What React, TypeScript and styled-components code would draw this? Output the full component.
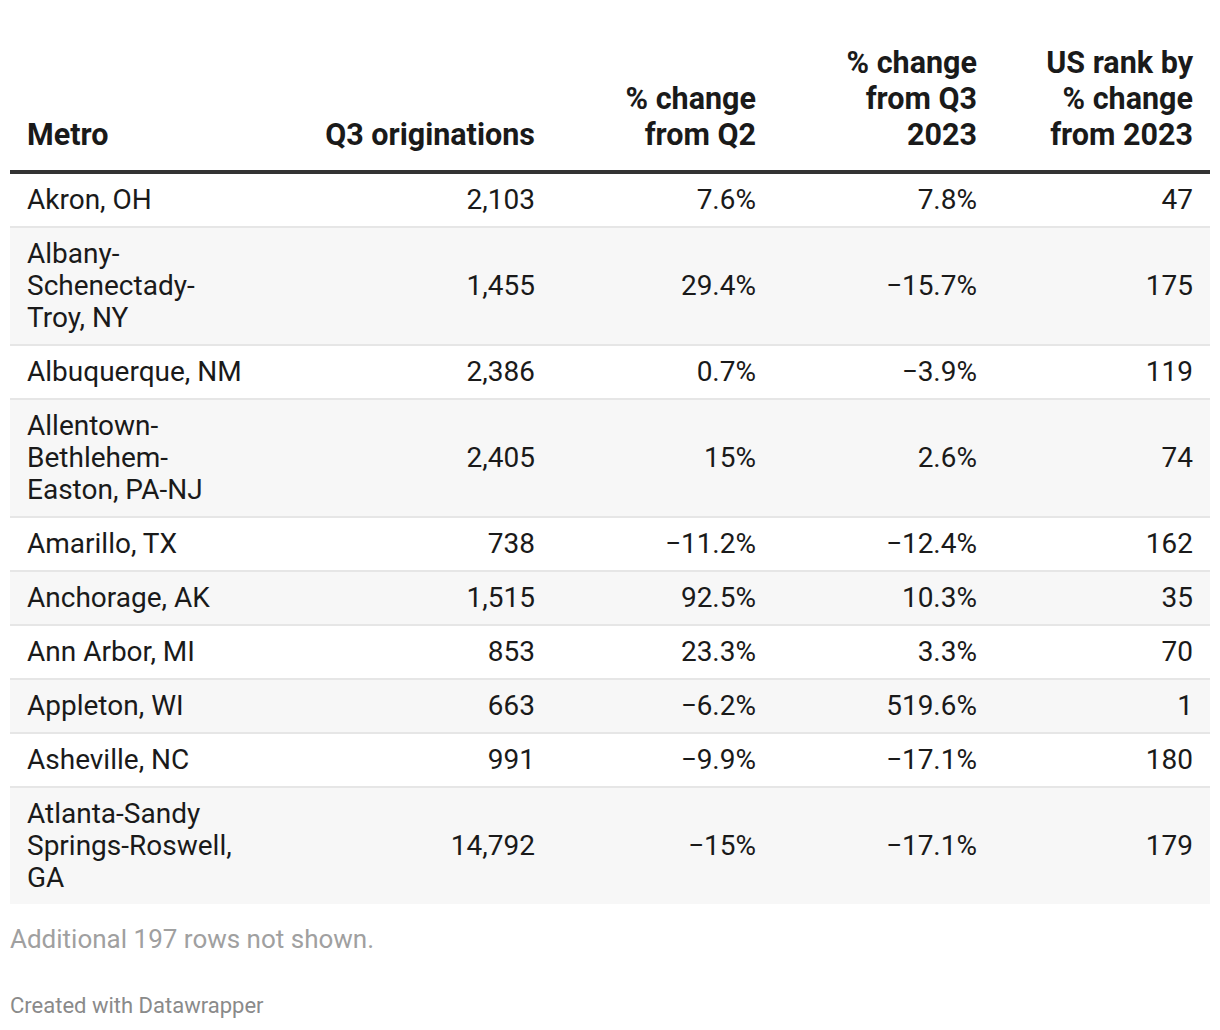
import React from "react";
import styled, { createGlobalStyle } from "styled-components";

const GlobalStyle = createGlobalStyle`
  html, body {
    margin: 0;
    padding: 0;
    background: #ffffff;
  }
  body {
    font-family: Roboto, "Liberation Sans", Arial, sans-serif;
    color: #1d1d1d;
  }
`;

const Page = styled.div`
  padding: 45px 10px 0 10px;
  width: 1200px;
`;

const Table = styled.table`
  width: 1200px;
  border-collapse: collapse;
  table-layout: fixed;
  font-size: 28px;
`;

const HeadCell = styled.th<{ $align?: "left" | "right" }>`
  text-align: ${(p) => p.$align || "right"};
  vertical-align: bottom;
  font-weight: 700;
  font-size: 30.5px;
  line-height: 36px;
  padding: 0 17px 17px 17px;
  border-bottom: 4px solid #333333;
  color: #1a1a1a;
`;

const Row = styled.tr<{ $shade: boolean }>`
  background: ${(p) => (p.$shade ? "#f7f7f7" : "#ffffff")};
  border-bottom: 2px solid #e6e6e6;
  &:last-child {
    border-bottom: none;
  }
`;

const Cell = styled.td<{ $align?: "left" | "right" }>`
  text-align: ${(p) => p.$align || "right"};
  vertical-align: middle;
  line-height: 32px;
  padding: 10px 17px;
  color: #1a1a1a;
  font-variant-numeric: tabular-nums;
`;

const Note = styled.div`
  margin-top: 20px;
  font-size: 26px;
  line-height: 30px;
  color: #a0a0a0;
`;

const Credit = styled.div`
  margin-top: 39px;
  font-size: 22px;
  line-height: 26px;
  color: #8a8a8a;
`;

type Metro = [string, string, string, string, string];

const rows: Metro[] = [
  ["Akron, OH", "2,103", "7.6%", "7.8%", "47"],
  ["Albany-Schenectady-Troy, NY", "1,455", "29.4%", "\u221215.7%", "175"],
  ["Albuquerque, NM", "2,386", "0.7%", "\u22123.9%", "119"],
  ["Allentown-Bethlehem-Easton, PA-NJ", "2,405", "15%", "2.6%", "74"],
  ["Amarillo, TX", "738", "\u221211.2%", "\u221212.4%", "162"],
  ["Anchorage, AK", "1,515", "92.5%", "10.3%", "35"],
  ["Ann Arbor, MI", "853", "23.3%", "3.3%", "70"],
  ["Appleton, WI", "663", "\u22126.2%", "519.6%", "1"],
  ["Asheville, NC", "991", "\u22129.9%", "\u221217.1%", "180"],
  ["Atlanta-Sandy Springs-Roswell, GA", "14,792", "\u221215%", "\u221217.1%", "179"],
];

export default function App() {
  return (
    <Page>
      <GlobalStyle />
      <Table>
        <colgroup>
          <col style={{ width: 254 }} />
          <col style={{ width: 288 }} />
          <col style={{ width: 221 }} />
          <col style={{ width: 221 }} />
          <col style={{ width: 216 }} />
        </colgroup>
        <thead>
          <tr>
            <HeadCell $align="left">Metro</HeadCell>
            <HeadCell>Q3 originations</HeadCell>
            <HeadCell>
              % change
              <br />
              from Q2
            </HeadCell>
            <HeadCell>
              % change
              <br />
              from Q3
              <br />
              2023
            </HeadCell>
            <HeadCell>
              US rank by
              <br />
              % change
              <br />
              from 2023
            </HeadCell>
          </tr>
        </thead>
        <tbody>
          {rows.map((r, i) => (
            <Row key={r[0]} $shade={i % 2 === 1}>
              <Cell $align="left">{r[0]}</Cell>
              <Cell>{r[1]}</Cell>
              <Cell>{r[2]}</Cell>
              <Cell>{r[3]}</Cell>
              <Cell>{r[4]}</Cell>
            </Row>
          ))}
        </tbody>
      </Table>
      <Note>Additional 197 rows not shown.</Note>
      <Credit>Created with Datawrapper</Credit>
    </Page>
  );
}
